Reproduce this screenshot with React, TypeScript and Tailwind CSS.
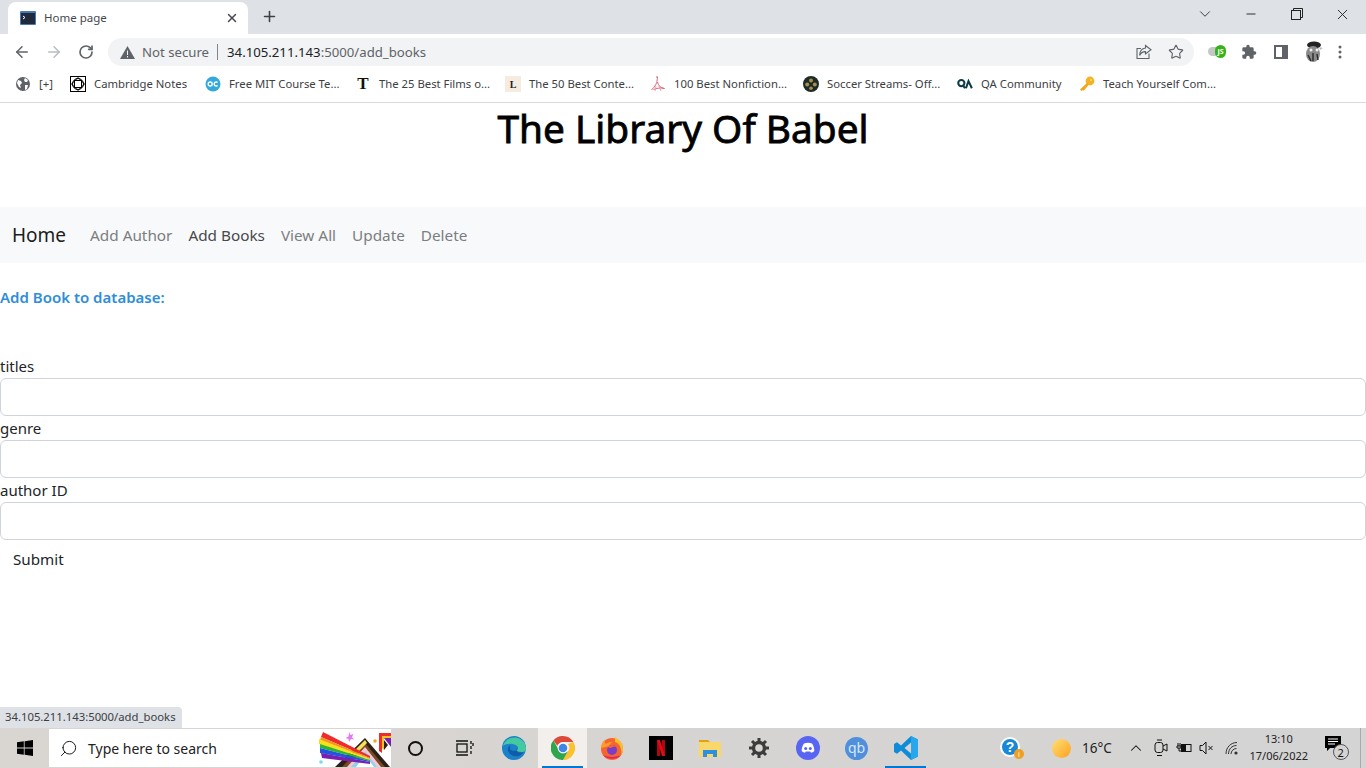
import { ArrowLeft, ArrowRight, RotateCw, Star, X, Plus, ChevronDown, Minus, ChevronUp, Search } from "lucide-react"

const uiFont = "font-['Noto_Sans','Open_Sans',sans-serif]"

const bookmarks = [
  { label: "[+]", width: "w-[55px]", icon: <GlobeIcon /> },
  { label: "Cambridge Notes", width: "w-[135px]", icon: <CambridgeIcon /> },
  { label: "Free MIT Course Te...", width: "w-[150px]", icon: <OcIcon /> },
  { label: "The 25 Best Films o...", width: "w-[150px]", icon: <span className="font-['Liberation_Serif',serif] text-[17px] leading-4 font-bold text-[#111]">T</span> },
  { label: "The 50 Best Conte...", width: "w-[145px]", icon: <span className="flex h-4 w-4 items-center justify-center bg-[#f5ebe0] font-['Liberation_Serif',serif] text-[10px] font-bold text-[#222]">L</span> },
  { label: "100 Best Nonfiction...", width: "w-[153px]", icon: <PdfIcon /> },
  { label: "Soccer Streams- Off...", width: "w-[154px]", icon: <SoccerIcon /> },
  { label: "QA Community", width: "w-[122px]", icon: <QaIcon /> },
  { label: "Teach Yourself Com...", width: "w-[140px]", icon: <KeyIcon /> },
]

function GlobeIcon() {
  return (
    <svg width="16" height="16" viewBox="0 0 16 16">
      <circle cx="8" cy="8" r="7" fill="#5f6368" />
      <path d="M3 4l3 1 1 2-2 2 1 3-2-1-2-4zM10 2l3 2-1 2-2 0-1-2zM10 9l3 0-1 4-2 1z" fill="#fff" />
    </svg>
  )
}

function CambridgeIcon() {
  return (
    <svg width="16" height="16" viewBox="0 0 16 16" fill="none" stroke="#000" strokeWidth="1">
      <rect x="0.5" y="0.5" width="15" height="15" />
      <circle cx="8" cy="8" r="5.5" />
      <path d="M8 1.5L14.5 8 8 14.5 1.5 8z" />
      <rect x="4.5" y="4.5" width="7" height="7" />
    </svg>
  )
}

function OcIcon() {
  return (
    <svg width="16" height="16" viewBox="0 0 16 16">
      <circle cx="8" cy="8" r="7.5" fill="#33a9dc" />
      <circle cx="5.2" cy="8" r="2" fill="none" stroke="#fff" strokeWidth="1.4" />
      <path d="M12.6 6.6a2 2 0 1 0 0 2.8" fill="none" stroke="#fff" strokeWidth="1.4" />
    </svg>
  )
}

function PdfIcon() {
  return (
    <svg width="16" height="16" viewBox="0 0 16 16" fill="none" stroke="#d9667a" strokeWidth="1">
      <path d="M6 1h2M7.5 1c-.5 4 0 7-6 13M7.5 6c1 4 3 6 7 6.5-3-1-8-.5-11 1" />
      <path d="M6 10l-1 5M9 10l2 5" stroke="#e9a3ae" />
    </svg>
  )
}

function SoccerIcon() {
  return (
    <svg width="16" height="16" viewBox="0 0 16 16">
      <circle cx="8" cy="8" r="8" fill="#1d2a2a" />
      <circle cx="8" cy="4.5" r="2" fill="#a88f45" />
      <circle cx="4.2" cy="8.5" r="2" fill="#a88f45" />
      <circle cx="11.8" cy="8.5" r="2" fill="#a88f45" />
      <circle cx="8" cy="12.2" r="1.8" fill="#a88f45" />
    </svg>
  )
}

function QaIcon() {
  return (
    <svg width="17" height="12" viewBox="0 0 17 12" fill="none" stroke="#0c3b46" strokeWidth="2.2">
      <circle cx="4.6" cy="5" r="3.3" />
      <path d="M6 7l2.5 3.5M9.5 10.5L12.2 3l3.6 7.5" />
    </svg>
  )
}

function KeyIcon() {
  return (
    <svg width="16" height="16" viewBox="0 0 16 16">
      <circle cx="11" cy="5" r="4.4" fill="#f5b324" />
      <path d="M8.5 6.5L1 13.5l1.5 1.5 1.5-1 .8.8L9.5 9z" fill="#f0a818" />
      <circle cx="12" cy="4" r="1" fill="#ffe08a" />
    </svg>
  )
}

function ShareIcon() {
  return (
    <svg width="16" height="16" viewBox="0 0 16 16" fill="none" stroke="#5f6368" strokeWidth="1.1">
      <path d="M13 9.5V14.5H1V4.5H5" />
      <path d="M9.5 1.5L15 5.8 9.5 10V7.6C6.5 7.4 4.8 9 3.6 11.4 3.8 7.4 6 4.4 9.5 4z" />
    </svg>
  )
}

function JsToggle() {
  return (
    <div className="relative h-4 w-[18px]">
      <div className="absolute top-[3px] left-0 h-[9px] w-[14px] rounded-full bg-[#c4c7c5]" />
      <div className="absolute top-[1px] left-[7px] flex h-[13px] w-[11px] items-center justify-center rounded-full bg-[#38b21a] text-[7px] leading-none font-bold text-white">
        JS
      </div>
    </div>
  )
}

function PuzzleIcon() {
  return (
    <svg width="16" height="16" viewBox="0 0 24 24" fill="#5f6368">
      <path d="M20.5 11H19V7a2 2 0 0 0-2-2h-4V3.5a2.5 2.5 0 0 0-5 0V5H4a2 2 0 0 0-2 2v3.8h1.5a2.7 2.7 0 0 1 0 5.4H2V20a2 2 0 0 0 2 2h3.8v-1.5a2.7 2.7 0 0 1 5.4 0V22H17a2 2 0 0 0 2-2v-4h1.5a2.5 2.5 0 0 0 0-5z" />
    </svg>
  )
}

function SidePanelIcon() {
  return (
    <svg width="14" height="14" viewBox="0 0 14 14">
      <rect x="0" y="0" width="14" height="14" fill="#5f6368" />
      <rect x="2" y="2" width="6" height="10" fill="#fff" />
    </svg>
  )
}

function Avatar() {
  return (
    <svg width="20" height="22" viewBox="0 0 20 22">
      <ellipse cx="10" cy="4" rx="7" ry="3.5" fill="#222" />
      <ellipse cx="9" cy="13" rx="7" ry="8" fill="#8a8a8a" />
      <circle cx="7" cy="9" r="1.5" fill="#eee" />
      <circle cx="13" cy="9" r="1.5" fill="#eee" />
      <path d="M4 14l3 6M9 12l0 8M13 13l1 6" stroke="#2a2a2a" strokeWidth="1.4" />
      <path d="M15 6l4 1-3 2z" fill="#bbb" />
    </svg>
  )
}

function TabFavicon() {
  return (
    <svg width="16" height="14" viewBox="0 0 16 14">
      <rect width="16" height="14" rx="1" fill="#4a78b5" />
      <rect x="1" y="2" width="14" height="11" fill="#1f2a3a" />
      <path d="M3 5l2 1.5L3 8" stroke="#fff" fill="none" />
    </svg>
  )
}

function WindowsLogo() {
  return (
    <svg width="16" height="16" viewBox="0 0 16 16" fill="#000">
      <path d="M0 2.3l6.8-1v6.2H0zM7.6 1.2L16 0v7.5H7.6zM0 8.4h6.8v6.3L0 13.7zM7.6 8.4H16V16l-8.4-1.2z" />
    </svg>
  )
}

function PrideArt() {
  return (
    <svg width="73" height="38" viewBox="0 0 73 38" className="absolute top-0 right-0 overflow-hidden">
      {/* prism */}
      <path d="M17 38L47 9l25 29z" fill="#2b2017" />
      <path d="M24 38L47 14l20 24z" fill="#7a4a24" />
      <path d="M29 38L47 18l16 20z" fill="#f7c6d6" />
      <path d="M33 38L47 22l12 16z" fill="#8fd3ea" />
      <path d="M38 38L47 26l9 12z" fill="#fff" />
      <path d="M37 21l10-10 2 3-9 9z" fill="#f7e05a" />
      {/* rainbow beam */}
      <path d="M5 3L52 27v2L3 8z" fill="#ef2b2b" />
      <path d="M3 8L52 29v1L2 11z" fill="#f7941d" />
      <path d="M1 10L52 30v1L1 15z" fill="#f7e11d" />
      <path d="M2 15L52 31v1L2 19z" fill="#2eb52e" />
      <path d="M2 19L52 32v1L2 24z" fill="#1f55e0" />
      <path d="M3 24L52 33v2L4 29z" fill="#7a1fb0" />
      {/* second beam */}
      <path d="M61 4h12v3h-9v17l-3-2z" fill="#ef2b2b" />
      <path d="M64 7h9v2h-7v12l-2-2z" fill="#f7c21d" />
      <path d="M66 9h7v9z" fill="#7a1fb0" />
      <path d="M66 11l4 5-4 5z" fill="#2b2017" />
      <path d="M31 3l1.500 3 3-1-1.500 3 2 2.500-3-.5-2 3-.5-3-3-1 3-1.500z" fill="#e27bf0" />
      <circle cx="57" cy="12" r="1.800" fill="#f5a623" />
      <circle cx="3" cy="33" r="1.800" fill="#72dcec" />
    </svg>
  )
}

function TaskViewIcon() {
  return (
    <svg width="18" height="16" viewBox="0 0 18 16" fill="none" stroke="#111" strokeWidth="1.3">
      <path d="M0 1h12M0 15h12" />
      <rect x="1" y="4" width="10" height="8" />
      <path d="M15 1v3M15 6v3M15 11v3M17 3v3" />
    </svg>
  )
}

function EdgeIcon() {
  return (
    <svg width="24" height="24" viewBox="0 0 24 24">
      <circle cx="12" cy="12" r="12" fill="#1b82c9" />
      <path d="M1 10C3 2 14-2 21 5c2.500 2.500 3 5 3 8 0 2-1.500 3-4 3-3.500 0-5-1-5-2 1-1 1-3-.5-4.500C11 7 4 7 1 10z" fill="#45c9a0" />
      <path d="M14.500 9.500C17 12 15 15 12 15c-2 0-4-1-4-3 0-1 .5-2 1-2.500C6 10 5 13 6.500 16c1.500 3 5.500 5 10 4 2-.5 4-2 5-4-1 .5-2 .5-3 .5-3 0-4-1-4.500-2.500 1.500-1 1.500-3 .5-4.500z" fill="#0f5ca8" />
    </svg>
  )
}

function ChromeIcon() {
  return (
    <svg width="24" height="24" viewBox="0 0 24 24">
      <path d="M12 0a12 12 0 0 1 10.400 6H12a6 6 0 0 0-5.600 3.800L2.400 4.500A12 12 0 0 1 12 0z" fill="#de4a3a" />
      <path d="M22.400 6A12 12 0 0 1 12 24l4.800-8.500A6 6 0 0 0 17 8z" fill="#fbc12e" />
      <path d="M12 24A12 12 0 0 1 2.400 4.500l5 8.800A6 6 0 0 0 16.800 15.500z" fill="#2fa54d" />
      <circle cx="12" cy="12" r="5.400" fill="#fff" />
      <circle cx="12" cy="12" r="4.300" fill="#3f86e8" />
    </svg>
  )
}

function FirefoxIcon() {
  return (
    <svg width="24" height="24" viewBox="0 0 24 24">
      <circle cx="12" cy="13" r="11" fill="#f5652e" />
      <path d="M15 1c5 3 8 7 8 12 0 2-.5 4-1.500 5.500C22 12 19 7 15 6z" fill="#fcbf2a" />
      <path d="M1 12C1 8 3 5 5 4c-.5 2 0 3 1 4 2-2 5-2 7-1-3 0-4 2-3 3z" fill="#ff9a2e" />
      <circle cx="12" cy="14" r="5" fill="#7a3cc9" />
      <path d="M7 11c2-2 6-3 9 0-2-.5-4 0-5 1z" fill="#f5652e" />
      <path d="M3 19c3 4 13 6 18 0-3 2-12 3-18 0z" fill="#e3245e" />
    </svg>
  )
}

function NetflixIcon() {
  return (
    <svg width="24" height="24" viewBox="0 0 24 24">
      <rect width="24" height="24" fill="#000" />
      <rect x="8" y="4" width="3" height="16" fill="#b00710" />
      <rect x="13" y="4" width="3" height="16" fill="#b00710" />
      <path d="M8 4h3l5 16h-3z" fill="#e50914" />
    </svg>
  )
}

function FolderIcon() {
  return (
    <svg width="22" height="18" viewBox="0 0 22 18">
      <path d="M0 1h9l2 2H0z" fill="#e0a412" />
      <rect y="3" width="22" height="15" fill="#f9d769" />
      <path d="M4 18V11h14v7h-4v-3H8v3z" fill="#2d8fe0" />
    </svg>
  )
}

function GearIcon() {
  return (
    <svg width="20" height="20" viewBox="0 0 20 20" fill="none" stroke="#3c3c3c">
      <circle cx="10" cy="10" r="5.500" strokeWidth="3.400" />
      <path d="M10 0v4M10 16v4M0 10h4M16 10h4M3 3l2.800 2.800M14.200 14.200L17 17M3 17l2.800-2.800M14.200 5.800L17 3" strokeWidth="3" />
    </svg>
  )
}

function DiscordIcon() {
  return (
    <svg width="24" height="24" viewBox="0 0 24 24">
      <circle cx="12" cy="12" r="12" fill="#5865f2" />
      <path d="M8 7.500c2.500-1 5.500-1 8 0 1.500 2 2.300 4.500 2.300 7.500-1 1-2.300 1.500-3.300 1.700l-.8-1.300H9.800L9 16.700C8 16.500 6.700 16 5.700 15c0-3 .8-5.500 2.300-7.500z" fill="#fff" />
      <circle cx="9.700" cy="12.500" r="1.500" fill="#5865f2" />
      <circle cx="14.300" cy="12.500" r="1.500" fill="#5865f2" />
    </svg>
  )
}

function QbIcon() {
  return (
    <div className={`flex h-[23px] w-[23px] items-center justify-center rounded-full bg-[#4f8fdb] text-[14px] leading-none text-[#d9e8f8] ${uiFont}`}>
      qb
    </div>
  )
}

function VsCodeIcon() {
  return (
    <svg width="24" height="24" viewBox="0 0 24 24">
      <path d="M17 0l7 3.400v17.200L17 24 7 14.500 3 17.700 0 16v-8l3-1.700 4 3.200zM17 6.500L10.500 12l6.500 5.500z" fill="#0f8bd8" />
      <path d="M17 0l7 3.400v17.200L17 24z" fill="#28a8ec" />
    </svg>
  )
}

function HelpBadge() {
  return (
    <div className="relative h-[22px] w-[24px]">
      <div className="flex h-[20px] w-[20px] items-center justify-center rounded-full border-2 border-white bg-[#1788d8] font-['Liberation_Sans',sans-serif] text-[14px] leading-none font-bold text-white">
        ?
      </div>
      <div className="absolute right-0 bottom-0 flex h-[10px] w-[10px] items-center justify-center rounded-full bg-[#f0a020] text-[7px] leading-none text-white">
        i
      </div>
    </div>
  )
}

function MeetIcon() {
  return (
    <svg width="14" height="18" viewBox="0 0 14 18" fill="none" stroke="#111" strokeWidth="1">
      <rect x="1" y="3.500" width="8" height="10" rx="2.500" />
      <path d="M9 7l4-2v7l-4-2M3 1h5M3 16.500h5" />
    </svg>
  )
}

function PowerIcon() {
  return (
    <svg width="16" height="12" viewBox="0 0 16 12" fill="none" stroke="#111" strokeWidth="1">
      <rect x="5.500" y="2.500" width="9.500" height="7" />
      <rect x="5.500" y="2.500" width="4" height="7" fill="#111" />
      <path d="M2 1v3M4 1v3M1 4h4v2H1zM3 6v3h3" />
    </svg>
  )
}

function MuteIcon() {
  return (
    <svg width="15" height="14" viewBox="0 0 15 14" fill="none" stroke="#111" strokeWidth="1">
      <path d="M1 4.500h2.500L7 1v12L3.500 9.500H1z" />
      <path d="M9.500 5l4 4M13.500 5l-4 4" />
    </svg>
  )
}

function WifiIcon() {
  return (
    <svg width="15" height="14" viewBox="0 0 15 14" fill="none" stroke="#333" strokeWidth="1">
      <path d="M1 13C1 6 6 1.500 12 1.500M3.500 13c0-5 3.500-8.500 8-8.500M6 13c0-3 2.500-5.500 5.500-5.500" />
      <circle cx="11" cy="12" r="1.600" fill="#333" stroke="none" />
    </svg>
  )
}

function NotificationIcon() {
  return (
    <div className="relative h-[24px] w-[24px]">
      <svg width="16" height="16" viewBox="0 0 16 16" className="absolute top-0 left-0">
        <path d="M0 0h16v12H5l-3 3v-3H0z" fill="#000" />
        <path d="M3 3h10M3 5.500h10M3 8h7" stroke="#fff" />
      </svg>
      <div className={`absolute right-0 bottom-0 flex h-[16px] w-[16px] items-center justify-center rounded-full border border-[#555] bg-[#d4d4d4] text-[11px] leading-none text-[#111] ${uiFont}`}>
        2
      </div>
    </div>
  )
}

function TaskbarApp({ children, active, running }: { children: React.ReactNode; active?: boolean; running?: boolean }) {
  return (
    <div className={`relative flex h-10 w-[49px] items-center justify-center ${active ? "bg-[#f2efec]" : ""}`}>
      {children}
      {(active || running) && <div className="absolute right-[4px] bottom-0 left-[4px] h-[2px] bg-[#0078d4]" />}
    </div>
  )
}

function Field({ label }: { label: string }) {
  return (
    <div>
      <label className="block h-6 text-[15px] leading-6 text-[#212529]">{label}</label>
      <input type="text" className="block h-[38px] w-full rounded-[6px] border border-[#ced4da] bg-white" />
    </div>
  )
}

export default function App() {
  const navLinks = [
    { label: "Add Author", color: "text-[#7b7e81]" },
    { label: "Add Books", color: "text-[#48494a]" },
    { label: "View All", color: "text-[#7b7e81]" },
    { label: "Update", color: "text-[#7b7e81]" },
    { label: "Delete", color: "text-[#7b7e81]" },
  ]

  return (
    <div className={`relative flex h-[768px] w-[1366px] flex-col overflow-hidden bg-white ${uiFont}`}>
      {/* tab strip */}
      <div className="flex h-[34px] items-end bg-[#dee1e6]">
        <div className="relative ml-2 flex h-[32px] w-[240px] items-center rounded-t-[8px] bg-white pr-[9px] pb-[1px] pl-[12px]">
          <TabFavicon />
          <span className="ml-[8px] flex-1 text-[11.500px] text-[#45494d]">Home page</span>
          <X size={14} strokeWidth={2.5} className="text-[#45494d]" />
        </div>
        <Plus size={17} strokeWidth={2.2} className="mb-[9px] ml-[13px] text-[#3c4043]" />
        <div className="flex-1" />
        <div className="mb-[11px] flex items-center text-[#222]">
          <ChevronDown size={18} strokeWidth={1.3} className="mr-[30px] text-[#3c3c3c]" />
          <Minus size={14} strokeWidth={1.6} className="mr-[33px]" />
          <svg width="12" height="12" viewBox="0 0 12 12" fill="none" stroke="#222" className="mr-[31px]">
            <rect x="0.500" y="2.500" width="9" height="9" />
            <path d="M2.500 2.500v-2h9v9h-2" />
          </svg>
          <X size={17} strokeWidth={1.3} className="mr-[15px]" />
        </div>
      </div>

      {/* address toolbar */}
      <div className="flex h-[36px] items-center bg-white">
        <div className="flex w-[108px] items-center pl-[13px]">
          <ArrowLeft size={18} strokeWidth={2} className="text-[#5f6368]" />
          <ArrowRight size={18} strokeWidth={2} className="ml-[14px] text-[#b9bcc0]" />
          <RotateCw size={16} strokeWidth={2.5} className="ml-[15px] text-[#5f6368]" />
        </div>
        <div className="flex h-[28px] w-[1086px] items-center rounded-full bg-[#f1f3f4] pr-[10px] pl-[12px]">
          <svg width="15" height="13" viewBox="0 0 15 13">
            <path d="M7.500 0L15 13H0z" fill="#5f6368" />
            <path d="M7 4.500h1v4.500H7zM7 10h1v1.500H7z" fill="#f1f3f4" />
          </svg>
          <span className="mt-[1px] ml-[7px] text-[13.200px] text-[#5f6368]">Not secure</span>
          <div className="mx-[8px] h-[16px] w-px bg-[#80868b]" />
          <span className="mt-[1px] ml-[1px] text-[13.200px] text-[#202124]">
            34.105.211.143<span className="text-[#5f6368]">:5000/add_books</span>
          </span>
          <div className="flex-1" />
          <ShareIcon />
          <Star size={16} strokeWidth={1.7} className="ml-[16px] text-[#5f6368]" />
        </div>
        <div className="ml-[14px] flex items-center">
          <JsToggle />
          <div className="ml-[15px]"><PuzzleIcon /></div>
          <div className="ml-[17px]"><SidePanelIcon /></div>
          <div className="ml-[16px]"><Avatar /></div>
          <svg width="4" height="14" viewBox="0 0 4 14" fill="#5f6368" className="ml-[14px]">
            <circle cx="2" cy="2" r="1.500" />
            <circle cx="2" cy="7" r="1.500" />
            <circle cx="2" cy="12" r="1.500" />
          </svg>
        </div>
      </div>

      {/* bookmarks bar */}
      <div className="flex h-[33px] items-center border-b border-[#d9dadc] bg-white pb-[4px] pl-[15px]">
        {bookmarks.map((b) => (
          <div key={b.label} className={`flex shrink-0 items-center gap-2 ${b.width}`}>
            <div className="flex h-4 w-4 shrink-0 items-center justify-center">{b.icon}</div>
            <span className="text-[11.300px] whitespace-nowrap text-[#3c4043]">{b.label}</span>
          </div>
        ))}
      </div>

      {/* page */}
      <div className="flex-1">
        <h1 className="h-[104px] text-center text-[38.800px] leading-[50px] font-normal text-black [-webkit-text-stroke:0.8px_black]">The Library Of Babel</h1>

        <nav className="flex h-[56px] items-center bg-[#f8f9fa] pl-[12px]">
          <span className="text-[19px] text-[#1c1d1e]">Home</span>
          <ul className="mt-[1px] ml-[16px] flex">
            {navLinks.map((l) => (
              <li key={l.label} className={`px-[8px] text-[15.300px] ${l.color}`}>{l.label}</li>
            ))}
          </ul>
        </nav>

        <h2 className="mt-[22px] mb-[45px] h-6 text-[15px] leading-6 font-semibold text-[#2f8ed6]">Add Book to database:</h2>

        <form>
          <Field label="titles" />
          <Field label="genre" />
          <Field label="author ID" />
          <button type="button" className="h-[38px] px-[13px] text-[15.200px] text-[#212529]">Submit</button>
        </form>
      </div>

      {/* link status bubble */}
      <div className="absolute bottom-[40px] left-0 flex h-[21px] w-[182px] items-center rounded-tr-[4px] bg-[#dee1e6] pl-[5px] text-[11.300px] text-[#3c4043]">
        34.105.211.143:5000/add_books
      </div>

      {/* taskbar */}
      <div className="flex h-10 items-center bg-gradient-to-r from-[#d9d5d1] to-[#d4d4d4]">
        <div className="flex h-10 w-[49px] items-center justify-center"><WindowsLogo /></div>
        <div className="relative flex h-[38px] w-[342px] items-center bg-white pl-[10px]">
          <Search size={19} strokeWidth={1.2} className="-scale-x-100 text-[#111]" />
          <span className="ml-[10px] text-[14px] text-[#222]">Type here to search</span>
          <PrideArt />
        </div>
        <TaskbarApp><div className="h-[15px] w-[15px] rounded-full border-2 border-[#111]" /></TaskbarApp>
        <TaskbarApp><TaskViewIcon /></TaskbarApp>
        <TaskbarApp><EdgeIcon /></TaskbarApp>
        <TaskbarApp active><ChromeIcon /></TaskbarApp>
        <TaskbarApp><FirefoxIcon /></TaskbarApp>
        <TaskbarApp><NetflixIcon /></TaskbarApp>
        <TaskbarApp><FolderIcon /></TaskbarApp>
        <TaskbarApp><GearIcon /></TaskbarApp>
        <TaskbarApp><DiscordIcon /></TaskbarApp>
        <TaskbarApp><QbIcon /></TaskbarApp>
        <TaskbarApp running><VsCodeIcon /></TaskbarApp>

        <div className="ml-[70px]"><HelpBadge /></div>
        <div className="ml-[28px] h-[19px] w-[19px] rounded-full bg-gradient-to-br from-[#ffe070] to-[#ffa010]" />
        <span className="ml-[11px] text-[13.500px] text-[#222]">16°C</span>
        <ChevronUp size={18} strokeWidth={1.4} className="ml-[15px] text-[#111]" />
        <div className="ml-[9px]"><MeetIcon /></div>
        <div className="ml-[8px]"><PowerIcon /></div>
        <div className="ml-[7px]"><MuteIcon /></div>
        <div className="ml-[11px]"><WifiIcon /></div>
        <div className="ml-[9px] flex w-[60px] flex-col items-center pb-[2px] text-[11px] leading-[17px] text-[#222]">
          <span>13:10</span>
          <span>17/06/2022</span>
        </div>
        <div className="ml-[16px]"><NotificationIcon /></div>
        <div className="ml-[11px] h-10 w-px bg-[#aaa]" />
      </div>
    </div>
  )
}
